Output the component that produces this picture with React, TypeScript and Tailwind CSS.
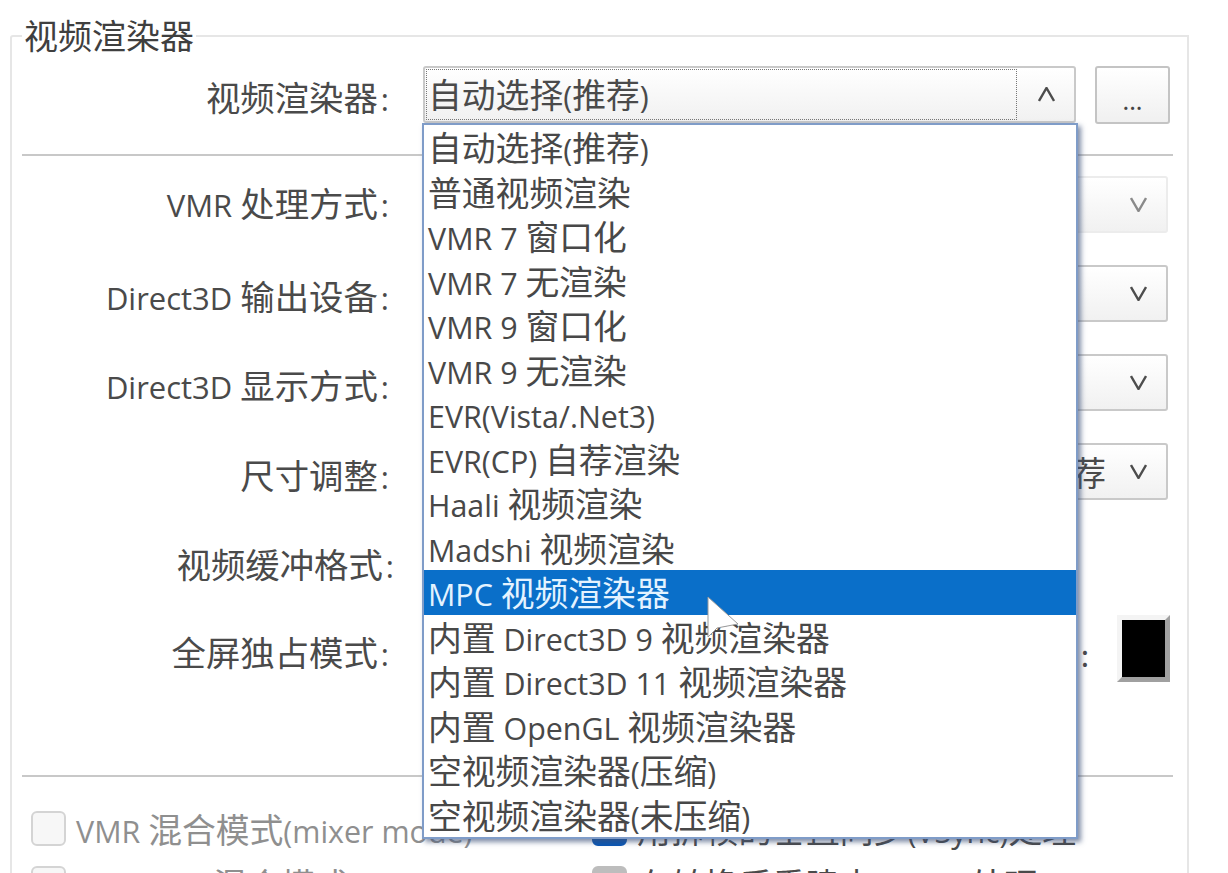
const fontStack = '"Noto Sans CJK SC", sans-serif';

const options = [
  '自动选择(推荐)',
  '普通视频渲染',
  'VMR 7 窗口化',
  'VMR 7 无渲染',
  'VMR 9 窗口化',
  'VMR 9 无渲染',
  'EVR(Vista/.Net3)',
  'EVR(CP) 自荐渲染',
  'Haali 视频渲染',
  'Madshi 视频渲染',
  'MPC 视频渲染器',
  '内置 Direct3D 9 视频渲染器',
  '内置 Direct3D 11 视频渲染器',
  '内置 OpenGL 视频渲染器',
  '空视频渲染器(压缩)',
  '空视频渲染器(未压缩)',
];

// latin runs sit a bit smaller than the CJK ones in the picture
function Mixed({ text }: { text: string }) {
  const parts = text.split(/([\x20-\x7e]+)/).filter(Boolean);
  return (
    <>
      {parts.map((part, i) =>
        /^[\x20-\x7e]+$/.test(part) ? (
          <span key={i} className="text-[0.9em] font-['Open_Sans']">
            {part}
          </span>
        ) : (
          <span key={i}>{part}</span>
        ),
      )}
    </>
  );
}

function Chevron({ up = false, faint = false }: { up?: boolean; faint?: boolean }) {
  return (
    <svg width="17" height="15" viewBox="0 0 17 15" fill="none" className={faint ? 'text-[#8a8a8a]' : 'text-[#4d4d4d]'}>
      <polyline
        points={up ? '1,14 8.5,1 16,14' : '1,1 8.5,14 16,1'}
        stroke="currentColor"
        strokeWidth="2.4"
      />
    </svg>
  );
}

function Label({ text, className = '' }: { text: string; className?: string }) {
  return (
    <div className={'w-[378px] pr-[1px] shrink-0 text-right text-[34.4px] leading-none text-[#4a4a4a] whitespace-nowrap ' + className}>
      <Mixed text={text} />
      <span className="ml-[3px] text-[0.9em] font-['Open_Sans']">:</span>
    </div>
  );
}

function Combo({ label, faint = false, value, labelClass }: { label: string; faint?: boolean; value?: string; labelClass?: string }) {
  return (
    <div className="flex items-center h-[57px] mb-[32px] last:mb-0">
      <Label text={label} className={labelClass} />
      <div
        className={
          'ml-[33px] w-[745px] h-full flex items-center justify-end rounded-[3px] border-2 bg-gradient-to-b from-[#ffffff] to-[#f1f1f1] ' +
          (faint ? 'border-[#ececec]' : 'border-[#c9c9c9]')
        }
      >
        {value && <span className="text-[33.8px] leading-none text-[#4a4a4a] mr-[24px]">{value}</span>}
        <div className="mr-[19px]">
          <Chevron faint={faint} />
        </div>
      </div>
    </div>
  );
}

function Check({ label, tone }: { label: string; tone: 'off' | 'blue' | 'gray' }) {
  const box =
    tone === 'blue'
      ? 'bg-[#0b57b4] border-[#0b57b4]'
      : tone === 'gray'
        ? 'bg-[#bdbdbd] border-[#bdbdbd]'
        : 'bg-[#f7f7f7] border-[#d4d4d4]';
  return (
    <div className="flex items-center gap-[10px] h-[35px] whitespace-nowrap">
      <div className={'w-[35px] h-[35px] shrink-0 rounded-[6px] border-2 ' + box} />
      <span className={'text-[33.8px] leading-none pt-[2px] ' + (tone === 'off' ? 'text-[#8f8f8f]' : 'text-[#4a4a4a]')}>
        <Mixed text={label} />
      </span>
    </div>
  );
}

export default function App() {
  return (
    <div
      className="relative w-[1228px] h-[873px] overflow-hidden bg-white pt-[35px] pl-[10px]"
      style={{ fontFamily: fontStack }}
    >
      {/* group box */}
      <div className="relative w-[1179px] h-[900px] border-2 border-[#e6e6e6] rounded-tl-[3px]">
        <div className="absolute left-[10px] top-[-19px] bg-white px-[2px] text-[34px] leading-none text-[#3f3f3f]">
          视频渲染器
        </div>

        <div className="flex items-start h-[58px] mt-[29px]">
          <Label text="视频渲染器" className="pt-[13px]" />
          <div className="ml-[33px] w-[653px] h-[57px] flex rounded-[3px] border-2 border-[#c9c9c9] bg-gradient-to-b from-[#ffffff] to-[#f1f1f1]">
            <div className="m-[1px] w-[591px] flex items-center pl-[1px] border border-dotted border-[#777777] text-[33.8px] leading-none text-[#4a4a4a]">
              <span>
                <Mixed text="自动选择(推荐)" />
              </span>
            </div>
            <div className="flex-1 flex items-center justify-center">
              <Chevron up />
            </div>
          </div>
          <div className="ml-[19px] w-[75px] h-full flex items-center justify-center pt-[10px] rounded-[3px] border-2 border-[#c4c4c4] bg-gradient-to-b from-[#ffffff] to-[#f0f0f0] text-[24px] leading-none text-[#444444]">
            ...
          </div>
        </div>

        <div className="ml-[10px] mr-[14px] mt-[30px] h-[2px] bg-[#c8c8c8]" />

        <div className="mt-[20px]">
          <Combo label="VMR 处理方式" faint labelClass="pb-[4px]" />
          <Combo label="Direct3D 输出设备" labelClass="pt-[4px]" />
          <Combo label="Direct3D 显示方式" labelClass="pt-[4px]" />
          <Combo label="尺寸调整" value="推荐" labelClass="pt-[6px]" />
        </div>

        <div className="flex items-center h-[57px] mt-[37px]">
          <Label text="视频缓冲格式" className="pb-[4px] ml-[5px]" />
        </div>

        <div className="flex items-center h-[66px] mt-[21px]">
          <div className="pt-[8px]">
            <Label text="全屏独占模式" />
          </div>
          <div className="ml-auto mr-[17px] flex items-center gap-[28px]">
            <span className="pt-[12px] text-[30px] leading-none text-[#4a4a4a]">:</span>
            <div className="w-[53px] h-[67px] border-[5px] border-t-[#f4f4f4] border-l-[#f4f4f4] border-r-[#a0a0a0] border-b-[#a0a0a0] bg-black" />
          </div>
        </div>

        <div className="ml-[10px] mr-[14px] mt-[94px] h-[2px] bg-[#c8c8c8]" />

        <div className="grid grid-cols-[561px_1fr] gap-y-[20px] pl-[19px] mt-[34px]">
          <Check label="VMR 混合模式(mixer mode)" tone="off" />
          <Check label="用拆帧的垂直同步(VSync)处理" tone="blue" />
          <Check label="VMR YUV 混合模式" tone="off" />
          <Check label="在转换后重建中 mixer 处理" tone="gray" />
        </div>
      </div>

      {/* open dropdown list */}
      <div className="absolute left-[422px] top-[123px] w-[656px] h-[716px] bg-white border-2 border-[#7f9cc8] shadow-[3px_3px_5px_rgba(60,80,120,0.65)]">
        {options.map((item) => (
          <div
            key={item}
            className={
              'h-[44.5px] flex items-center pl-[4px] text-[33.8px] leading-none whitespace-nowrap ' +
              (item === 'MPC 视频渲染器' ? 'bg-[#0a6fc9] text-[#e4f3ff]' : 'text-[#484848]')
            }
          >
            <span>
              <Mixed text={item} />
            </span>
          </div>
        ))}
      </div>

      {/* mouse pointer */}
      <svg className="absolute left-[706px] top-[596px]" width="40" height="60" viewBox="0 0 40 60">
        <path d="M2 1 L2 41 L11 32 L32 28 Z" fill="#ffffff" stroke="#9a9a9a" strokeWidth="1" />
      </svg>
    </div>
  );
}
